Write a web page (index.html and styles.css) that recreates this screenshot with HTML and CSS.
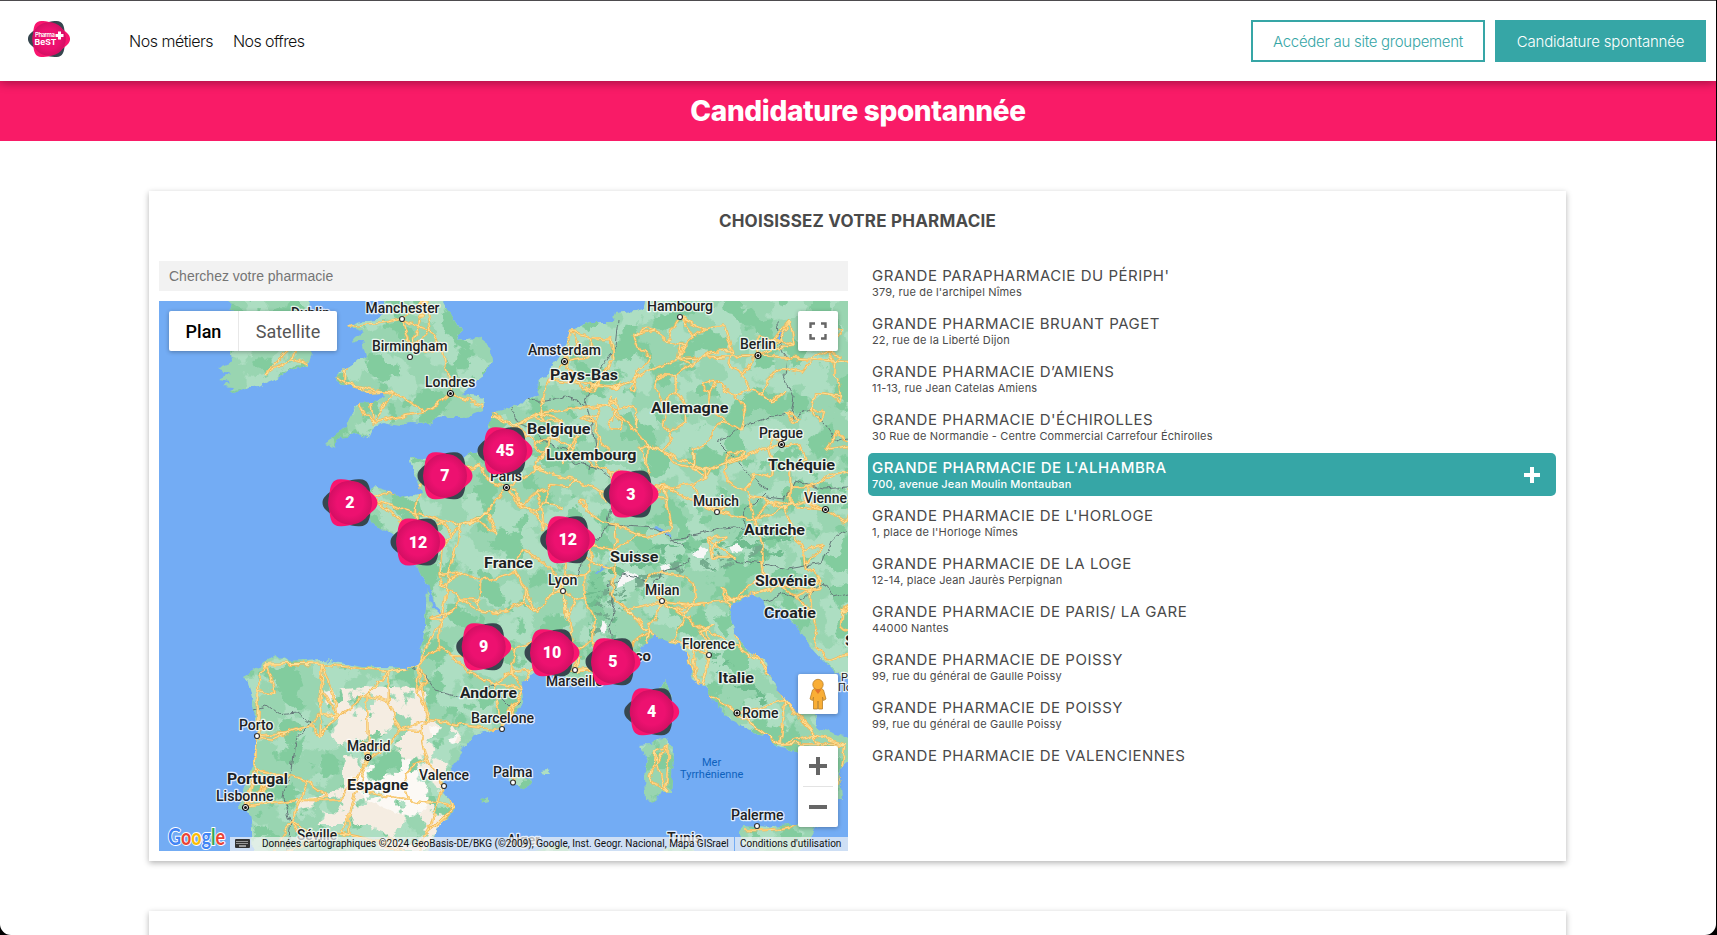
FILE: index.html
```html
<!DOCTYPE html>
<html lang="fr">
<head>
<meta charset="utf-8">
<title>Candidature spontannée</title>
<link rel="stylesheet" href="styles.css">
</head>
<body>
<div class="window">
<header class="header">
  <svg class="logo" viewBox="0 0 42 36" width="42" height="36">
    <use href="#badge" transform="translate(21 18) scale(.765)"/>
    <text class="logo-name" x="7" y="16" textLength="20">Pharma</text>
    <text class="logo-best" x="6.500" y="23.500" textLength="22" lengthAdjust="spacingAndGlyphs">BeST</text>
    <path d="M31.500 10.500v8M27.500 14.500h8" stroke="#fff" stroke-width="3"/>
  </svg>
  <nav class="nav"><a class="nav-a">Nos métiers</a><a class="nav-b">Nos offres</a></nav>
  <div class="actions"><a class="btn btn-outline"><span>Accéder au site groupement</span></a><a class="btn btn-full"><span>Candidature spontannée</span></a></div>
</header>
<h1 class="banner"><span>Candidature spontannée</span></h1>
<main class="content">
  <section class="card">
    <h2 class="card-title">CHOISISSEZ VOTRE PHARMACIE</h2>
    <div class="columns">
      <div class="left">
        <div class="search">Cherchez votre pharmacie</div>
        <div class="map">
          <svg class="map-svg" viewBox="159 301 689 550" width="689" height="550">
            <defs>
              <g id="badge">
                <path fill="#37474f" d="M-27.500 0c0-5 4-8 9-12C-8-20 0-24 10-23.500C18-23.500 20-17 20.500-8C21-3 21 3 20.500 8C20 17 18 23.500 10 23.500C0 24-8 20-18.500 12C-23.500 8-27.500 5-27.500 0z"/>
                <path fill="#f9156f" d="M27.500 0c0 5-4 8-9 12C8 20 0 24-10 23.500C-18 23.500-20 17-20.500 8C-21 3-21-3-20.500-8C-20-17-18-23.500-10-23.500C0-24 8-20 18.500-12C23.500-8 27.500-5 27.500 0z"/>
                <circle r="22" fill="url(#ball)"/>
              </g>
              <radialGradient id="ball"><stop offset=".6" stop-color="#ed1170"/><stop offset="1" stop-color="#d30f63"/></radialGradient>
              <g id="town"><circle r="2.500" fill="#fff" stroke="#333" stroke-width="1.200"/></g>
              <g id="capital"><circle r="3" fill="#fff" stroke="#111" stroke-width="1.200"/><circle r="1.500" fill="#111"/></g>
              <clipPath id="land">
                <path d="M225 295L310 295L306 312L310 350L312 353L308 366L292 370L277 378L260 385L230 394L234 388L222 387L229 382L218 380L231 374L216 369L232 362L230 340L238 325L233 311Z"/>
                <path d="M383 295L386 312L378 320L357 322L348 327L363 332L356 336L350 343L363 340L367 357L350 365L334 378L340 383L347 385L368 393L383 392L384 398L372 403L358 404L350 417L347 427L325 443L335 447L340 437L357 433L368 438L373 427L383 423L400 426L410 422L427 423L443 418L463 418L483 410L484 398L462 395L470 387L483 377L492 360L490 347L478 338L457 340L460 330L450 313L440 295Z"/>
                <path d="M647 295L643 309L637 311L615 313L613 322L590 322L570 330L567 343L560 357L545 377L537 387L540 394L528 398L510 408L490 413L490 430L480 450L463 457L465 467L452 463L427 465L425 459L410 458L417 477L422 493L400 498L390 491L377 487L362 492L363 510L370 523L390 532L400 545L417 565L423 577L427 585L425 627L418 665L407 668L380 667L363 667L323 660L287 662L277 656L265 662L243 677L247 683L250 693L253 710L257 737L253 763L243 790L238 807L250 813L252 830L253 860L425 860L438 827L455 807L443 793L445 783L452 767L463 750L475 735L502 728L510 717L523 703L522 683L533 673L553 675L567 677L600 687L623 673L640 650L653 635L677 643L687 653L693 680L707 690L713 703L733 720L753 733L767 735L777 747L797 752L806 770L826 790L836 800L843 800L842 787L838 770L850 760L850 738L823 730L815 725L818 716L798 713L783 697L770 680L767 663L740 643L733 630L730 613L733 603L753 593L763 600L767 612L780 607L793 623L807 643L833 670L860 690L860 295Z"/>
                <path d="M640 745L650 744L663 737L673 747L672 777L671 793L660 793L655 802L645 800L644 777L647 760ZM666 680L670 690L668 720L655 720L656 700ZM737 833L743 825L767 827L797 823L818 825L812 835L797 851L770 857L743 845ZM507 780L518 774L533 779L524 790L517 785ZM480 800L488 796L488 803L483 804ZM540 770L547 769L551 774L543 774ZM470 860L560 845L600 860ZM655 852L690 846L702 860Z"/>
              </clipPath>
              <filter id="rough" x="-5%" y="-5%" width="110%" height="110%"><feTurbulence type="fractalNoise" baseFrequency=".09" numOctaves="3" seed="4"/><feDisplacementMap in="SourceGraphic" scale="8" xChannelSelector="R" yChannelSelector="G"/></filter>
              <filter id="light" color-interpolation-filters="sRGB" x="0" y="0" width="100%" height="100%"><feTurbulence type="fractalNoise" baseFrequency=".028" numOctaves="4" seed="8"/><feColorMatrix values="0 0 0 0 .68  0 0 0 0 .87  0 0 0 0 .76  30 0 0 0 -14.500"/></filter>
              <filter id="forest" color-interpolation-filters="sRGB" x="0" y="0" width="100%" height="100%"><feTurbulence type="fractalNoise" baseFrequency=".036" numOctaves="4" seed="21"/><feColorMatrix values="0 0 0 0 .51  0 0 0 0 .80  0 0 0 0 .62  0 30 0 0 -16.800"/></filter>
              <filter id="dry" color-interpolation-filters="sRGB" x="-10%" y="-10%" width="120%" height="120%"><feTurbulence type="fractalNoise" baseFrequency=".035" numOctaves="4" seed="3" result="n"/><feColorMatrix in="n" values="0 0 0 0 1  0 0 0 0 1  0 0 0 0 1  0 30 0 0 -13.800" result="m"/><feComposite in="SourceGraphic" in2="m" operator="in"/></filter>
              <filter id="relief" color-interpolation-filters="sRGB" x="0" y="0" width="100%" height="100%"><feTurbulence type="fractalNoise" baseFrequency=".06 .12" numOctaves="4" seed="5" result="n"/><feColorMatrix in="n" values="0 0 0 0 1  0 0 0 0 1  0 0 0 0 1  0 22 0 0 -12" result="m"/><feComposite in="SourceGraphic" in2="m" operator="in"/></filter>
            </defs>
            <rect x="159" y="301" width="689" height="550" fill="#73acf4"/>
            <g filter="url(#rough)" color-interpolation-filters="sRGB">
              <g clip-path="url(#land)">
                <rect x="150" y="290" width="710" height="570" fill="#99d5b1"/>
                <rect x="150" y="290" width="710" height="570" filter="url(#light)"/>
                <rect x="150" y="290" width="710" height="570" filter="url(#forest)"/>
                <g filter="url(#dry)"><path fill="#f5ede2" d="M325 690L365 686L420 688L440 705L462 740L445 770L440 800L450 810L425 850L380 850L370 825L300 825L296 800L340 790L345 760L330 735Z"/><path fill="#fcf9f5" d="M430 725L458 735L450 758L435 750ZM375 758L410 760L440 790L415 820L365 800L350 780Z"/></g>
                <path fill="#6fbd8f" filter="url(#relief)" d="M585 590L610 560L660 545L700 540L780 520L800 530L780 560L720 570L670 575L630 590L615 640L590 640ZM700 635L730 660L770 700L760 705L715 670Z"/>
                <path fill="#7b9a8d" opacity=".5" filter="url(#relief)" d="M590 640L600 590L640 570L740 550L770 545L740 565L650 582L620 600L610 640Z"/>
                <path fill="#f7f7f7" d="M618 578l12-6 8 4-10 8-12 3zM692 556l8-10 7 5-6 8zM730 547l8-2 3 5-8 2zM603 620l5 7-4 6-4-5zM660 566l7-3 4 6-8 3z"/>
                <g class="rivers"><path d="M427 585l6 18 8 15M655 527l15 8M594 573l14-7M785 330l-10 12"/></g>
                <g class="borders"><path d="M618 320l-3 28-12 18-8 10-10 25 6 20 4 25-5 25M528 398l12 4 10-2 15-4 12 4 10 8M511 408l8 16 18 6 10 15 18 5 10 12 20 6 12 8 20 8M618 483l-8 30-3 12-12 20-12 12-6 22M607 525l18 2 30 2 15 8 12 10M600 640l14 10-4-20 4-25-6-18 15-12 20 4 10 12 6-18 20-6 12-8M671 540l25-6 25-5 25-2-4-15 12-8 14-14-20-16-18-20-12-12 12-8 20-10 24-8 16-4M778 322l2 20 6 14-2 20 10 22-4 20M790 418l20-8 15 14 12 18 11-4M765 497l20 2 10-18 28 8 25-2M733 560l25 3 30 6 35-6 8-22 17-12M763 602l20-8 20 6 20-18 10 15 15-4M412 668l14 8 10 14 30 8 25-12 20 20 10-5M253 710l14-4 10 8 22-2 12 10-16 18-4 30-8 28 8 24-5 40"/></g>
                <g class="roads" id="roads"></g>
              </g>
            </g>
            <g class="labels" id="labels"></g>
            <g class="sea"><text x="702" y="766">Mer</text><text x="680" y="778">Tyrrhénienne</text></g>
            <g class="logo-g"><text x="168" y="845" textLength="57" lengthAdjust="spacingAndGlyphs"><tspan fill="#4285f4">G</tspan><tspan fill="#ea4335">o</tspan><tspan fill="#fbbc05">o</tspan><tspan fill="#4285f4">g</tspan><tspan fill="#34a853">l</tspan><tspan fill="#ea4335">e</tspan></text></g>
            <g id="clusters" class="clusters"></g>
          </svg>
          <div class="types"><b>Plan</b><span>Satellite</span></div>
          <div class="control full"><svg width="18" height="18" viewBox="0 0 18 18"><path d="M1.500 6V1.500H6M12 1.500h4.500V6M16.500 12v4.500H12M6 16.500H1.500V12" fill="none" stroke="#666" stroke-width="2.400"/></svg></div>
          <div class="control pegman"><svg width="18" height="32" viewBox="0 0 18 32"><g fill="#f9ae36" stroke="#b9802a" stroke-width=".8"><path d="M3.500 12L1 21l2.500 1.500L4.500 19V31h4l.5-8 .5 8h4V19l1 3.500L17 21l-2.500-9L12 10H6z"/><circle cx="9" cy="6.500" r="5.200"/></g><path d="M5.500 11.500h7L9 16z" fill="#e5742b"/></svg></div>
          <div class="control zoom"><svg width="40" height="81" viewBox="0 0 40 81"><path d="M11 20h18M20 11v18M11 61h18" stroke="#666" stroke-width="4"/><path d="M5 40.500h30" stroke="#e3e3e3"/></svg></div>
          <div class="legal">
            <span class="keys"><svg width="15" height="9" viewBox="0 0 15 9"><rect width="15" height="9" rx="1" fill="#333"/><path d="M1.500 2.500h12M1.500 4.500h12" stroke="#fff" stroke-dasharray="1 1"/><path d="M4 7h7" stroke="#fff"/></svg></span>
            <span class="data">Données cartographiques ©2024 GeoBasis-DE/BKG (©2009), Google, Inst. Geogr. Nacional, Mapa GISrael</span>
            <span class="terms">Conditions d'utilisation</span>
          </div>
        </div>
      </div>
      <ul class="list">
        <li><b>GRANDE PARAPHARMACIE DU PÉRIPH'</b><small>379, rue de l'archipel Nîmes</small></li>
        <li><b>GRANDE PHARMACIE BRUANT PAGET</b><small>22, rue de la Liberté Dijon</small></li>
        <li><b>GRANDE PHARMACIE D’AMIENS</b><small>11-13, rue Jean Catelas Amiens</small></li>
        <li><b>GRANDE PHARMACIE D'ÉCHIROLLES</b><small>30 Rue de Normandie - Centre Commercial Carrefour Échirolles</small></li>
        <li class="active"><b>GRANDE PHARMACIE DE L'ALHAMBRA</b><small>700, avenue Jean Moulin Montauban</small><svg class="plus" width="16" height="16" viewBox="0 0 16 16"><path d="M8 0v16M0 8h16" stroke="#fff" stroke-width="4"/></svg></li>
        <li><b>GRANDE PHARMACIE DE L'HORLOGE</b><small>1, place de l'Horloge Nîmes</small></li>
        <li><b>GRANDE PHARMACIE DE LA LOGE</b><small>12-14, place Jean Jaurès Perpignan</small></li>
        <li><b>GRANDE PHARMACIE DE PARIS/ LA GARE</b><small>44000 Nantes</small></li>
        <li><b>GRANDE PHARMACIE DE POISSY</b><small>99, rue du général de Gaulle Poissy</small></li>
        <li><b>GRANDE PHARMACIE DE POISSY</b><small>99, rue du général de Gaulle Poissy</small></li>
        <li><b>GRANDE PHARMACIE DE VALENCIENNES</b></li>
      </ul>
    </div>
  </section>
  <section class="card next"></section>
</main>
</div>
<script src="map.js"></script>
</body>
</html>
```
FILE: styles.css
```css
* { box-sizing: border-box; }
html, body { margin: 0; height: 935px; overflow: hidden; background: #000; }
body { font-family: Inter, "Liberation Sans", sans-serif; color: #4a4a4a; }
.window { width: 1716px; height: 935px; overflow: hidden; background: #fff; border-top: 1px solid #4d4b4e; border-radius: 0 0 11px 11px; }
.header { height: 80px; display: flex; align-items: center; padding: 0 10px 0 28px; background: #fff; position: relative; box-shadow: 0 1px 10px rgba(0, 0, 0, .4); }
.logo { margin-top: -4px; flex: none; }
.logo-name { font: 600 6px Inter, sans-serif; fill: #fff; }
.logo-best { font: 700 8px Inter, sans-serif; fill: #fff; }
.nav { display: flex; gap: 20px; margin-left: 59px; font-size: 16px; font-weight: 300; color: #111; }
.nav-a { width: 84px; letter-spacing: -.48px; white-space: nowrap; }
.nav-b { letter-spacing: -.6px; white-space: nowrap; }
.actions { display: flex; gap: 10px; margin-left: auto; }
.btn { height: 42px; display: flex; align-items: center; justify-content: center; font-size: 15px; border: 2px solid #36a6a6; color: #36a6a6; white-space: nowrap; }
.btn-outline { width: 234px; font-weight: 300; letter-spacing: -.28px; }
.btn-full { width: 211px; background: #36a6a6; color: #fff; font-weight: 300; letter-spacing: -.18px; }
.banner { margin: 0; height: 60px; display: flex; align-items: center; justify-content: center; background: #f91b67; color: #fff; font-size: 28px; font-weight: 800; letter-spacing: -.35px; }
.content { padding: 50px 150px 0 149px; }
.card { height: 670px; background: #fff; box-shadow: 0 2px 6px rgba(0, 0, 0, .3); padding: 0 10px; margin-bottom: 50px; }
.card-title { margin: 0; height: 70px; padding-top: 19px; line-height: 22px; text-align: center; font-size: 17px; font-weight: 700; letter-spacing: .22px; }
.columns { display: flex; gap: 20px; }
.left { width: 689px; }
.search { height: 30px; margin-bottom: 10px; padding-left: 10px; background: #f2f2f2; line-height: 30px; font-family: "Liberation Sans", sans-serif; font-size: 14px; color: #757575; }
.map { position: relative; width: 689px; height: 550px; overflow: hidden; font-family: Roboto, sans-serif; }
.map-svg { display: block; }
.roads { fill: none; stroke-linejoin: round; }
.road-edge { stroke: #f3b95a; stroke-width: 2.3; }
.road-core { stroke: #ffe39b; stroke-width: .9; }
.borders { fill: none; stroke: #66797a; stroke-width: 1; }
.rivers { fill: none; stroke: #73acf4; stroke-width: 2.5; }
.labels text { font: 500 14px Roboto, sans-serif; fill: #1d2224; stroke: #fff; stroke-opacity: .8; stroke-width: 2.5px; paint-order: stroke; stroke-linejoin: round; }
.labels .country { font-size: 15.5px; font-weight: 700; }
.labels .tiny { font-size: 11px; font-weight: 400; }
.sea { font: 400 11px Roboto, sans-serif; fill: #0e62bd; }
.logo-g { font: 400 22px Lato, sans-serif; stroke: #fff; stroke-width: 2px; paint-order: stroke; }
.logo-g text { font-weight: 700; }
.clusters text { font: 900 16px Roboto, sans-serif; fill: #fff; text-anchor: middle; }
.types { position: absolute; left: 10px; top: 10px; width: 168px; height: 40px; display: flex; background: #fff; border-radius: 2px; box-shadow: 0 1px 4px rgba(0, 0, 0, .3); font-size: 18px; line-height: 41px; text-align: center; color: #565656; }
.types b { width: 70px; font-weight: 500; color: #000; border-right: 1px solid #e8e8e8; }
.types span { flex: 1; }
.control { position: absolute; left: 639px; width: 40px; height: 40px; display: flex; align-items: center; justify-content: center; background: #fff; border-radius: 2px; box-shadow: 0 1px 4px rgba(0, 0, 0, .3); }
.full { top: 10px; }
.pegman { top: 373px; }
.zoom { top: 445px; height: 81px; }
.legal { position: absolute; right: 0; bottom: 0; width: 618px; height: 14px; display: flex; font-size: 10px; line-height: 14px; color: #111; white-space: nowrap; }
.legal span { background: rgba(245, 245, 245, .7); }
.keys { width: 26px; padding: 2px 0 0 5px; line-height: 0; }
.data { width: 478px; padding-left: 6px; }
.terms { margin-left: 1px; flex: 1; padding-left: 5px; }
.list { margin: 0; padding: 0; list-style: none; flex: 1; height: 502px; overflow: hidden; }
.list li { position: relative; height: 43px; margin-bottom: 5px; padding: 5px 0 0 4px; border-radius: 5px; }
.list b, .list small { display: block; white-space: nowrap; width: max-content; }
.list b { font-size: 15px; font-weight: 400; line-height: 19px; height: 19px; letter-spacing: .52px; }
.list small { font-size: 11px; font-weight: 400; line-height: 15px; letter-spacing: .16px; }
.list .active { background: #36a6a6; color: #fff; }
.active b, .list .active small { font-weight: 500; }
.plus { position: absolute; right: 16px; top: 14px; }
```
FILE: map.js
```javascript
const NS = 'http://www.w3.org/2000/svg';
function add(parent, tag, attrs, text) {
  const e = document.createElementNS(NS, tag);
  for (const k in attrs) e.setAttribute(k, attrs[k]);
  if (text) e.textContent = text;
  parent.appendChild(e);
  return e;
}

// Seeded generator keeps the secondary road network stable between loads.
let seed = 17;
function rnd() { seed = (seed * 16807) % 2147483647; return seed / 2147483647; }

const nodes = [
  [402,319],[412,350],[450,393],[393,392],[368,392],[373,423],[425,412],[483,405],[430,330],[345,382],[300,340],[265,375],[292,358],[442,352],[350,326],[425,300],
  [490,415],[515,425],[540,413],[506,488],[480,465],[453,470],[415,513],[372,498],[415,540],[462,525],[487,512],[441,620],[478,655],[525,590],[563,591],[568,545],[535,470],[575,480],[610,495],[575,670],[545,665],[523,690],[610,665],[480,580],
  [387,672],[430,720],[502,730],[368,760],[444,785],[367,695],[340,715],[322,690],[265,665],[258,690],[257,736],[245,807],[320,735],[300,800],[305,845],[430,830],[410,800],[322,664],[418,665],[286,733],[278,775],[255,770],[385,845],[350,835],[452,808],[400,730],
  [550,380],[565,361],[610,405],[615,388],[680,317],[655,330],[678,358],[758,355],[735,395],[648,445],[705,470],[717,512],[665,487],[781,444],[825,510],[790,505],[755,520],[715,545],[640,535],[615,550],[585,575],[615,525],
  [662,601],[628,610],[648,632],[705,630],[733,600],[695,605],[709,655],[737,713],[780,745],[760,660],[846,745],[810,590],[780,585],[805,550],[835,475],[770,400],[790,320],[835,362],[700,690],[785,700],[815,735],
  [655,750],[668,745],[650,780],[665,792],[743,830],[790,827],[838,790],[515,783]
];
function scatter(x0, y0, x1, y1, step) {
  for (let x = x0; x < x1; x += step) for (let y = y0; y < y1; y += step)
    nodes.push([x + rnd() * step * .9, y + rnd() * step * .9]);
}
scatter(570, 325, 850, 515, 19);
scatter(520, 405, 570, 500, 18);
scatter(592, 375, 640, 425, 12);
scatter(420, 475, 600, 665, 27);
scatter(600, 520, 850, 600, 30);
scatter(265, 685, 440, 840, 36);
scatter(640, 595, 730, 640, 22);
scatter(800, 600, 850, 660, 22);

const used = new Set();
let d = '';
nodes.forEach((a, i) => {
  nodes.map((b, j) => [Math.hypot(a[0] - b[0], a[1] - b[1]), j])
    .sort((p, q) => p[0] - q[0]).slice(1, i < 118 ? 4 : 3)
    .forEach(([len, j]) => {
      const key = Math.min(i, j) + '-' + Math.max(i, j);
      if (len > 75 || used.has(key)) return;
      used.add(key);
      const b = nodes[j], k = len * .16;
      d += `M${a[0]} ${a[1]}Q${(a[0] + b[0]) / 2 + (rnd() - .5) * k} ${(a[1] + b[1]) / 2 + (rnd() - .5) * k} ${b[0]} ${b[1]}`;
    });
});
// Main motorways
d += 'M506 488L487 512L462 525L450 570L441 620L418 665L387 672L367 695L368 760L340 800L300 800L245 807M506 488L540 520L568 545L563 591L572 640L575 670L545 665L523 690L502 730L475 745L450 785L452 808L430 830M418 665L425 705L430 720L460 725L502 730M506 488L535 470L575 480L610 495L665 487L717 512L755 520L790 505L825 510M515 425L540 413L610 405L648 445L705 470L781 444M550 380L615 388L678 358L758 355L848 362M575 670L610 665L628 648L648 632L687 653L700 690L737 713L780 745M628 610L662 601L695 605L733 600L780 585L810 590M662 601L705 630L760 660L785 700L815 735L846 745M265 665L322 664L387 672M258 690L257 736L255 770L245 807';
const roads = document.getElementById('roads');
add(roads, 'path', { d, class: 'road-edge' });
add(roads, 'path', { d, class: 'road-core' });

// name, left, baseline, width, country label?
const labels = document.getElementById('labels');
[['Manchester',365.5,312.7,74],['Birmingham',372,351,75.5],['Londres',425,387,50.5],['Dublin',291,318,39],['Hambourg',647,311,66],['Amsterdam',528,355,73],['Berlin',740,349,36],['Pays-Bas',550,380,68,1],['Allemagne',651,413,77.5,1],['Belgique',527,434,63.5,1],['Luxembourg',546,460,90.5,1],['Prague',759,438,44],['Tchéquie',768,470,67,1],['Paris',490,481,32],['Munich',693,506,46],['Vienne',804,503,43],['Autriche',744,535,61,1],['Suisse',610,562,48.5,1],['France',484,568,49,1],['Lyon',548,585,29.5],['Slovénie',755,586,61,1],['Milan',645,595,34.5],['Croatie',764,618,52,1],['Florence',682,649,53],['Italie',718,683,36,1],['Rome',742,718,36.5],['Monaco',597,661,54,1],['Marseille',546,686,57],['Andorre',460,698,57,1],['Barcelone',471,723,63],['Porto',239,730,34.5],['Madrid',347,751,43.5],['Portugal',227,784,61,1],['Espagne',347,790,61.5,1],['Lisbonne',216,801,57.5],['Valence',419,780,50],['Palma',493,777,39.5],['Séville',297,840,40],['Alger',507,845,33],['Tunis',667,843,35],['Palerme',731,820,52.5],['S',845,646,10,1]]
  .forEach(([name, x, y, w, c]) => add(labels, 'text', { x, y, textLength: w, lengthAdjust: 'spacingAndGlyphs', class: c ? 'country' : 'city' }, name));
add(labels, 'text', { x: 841, y: 681, class: 'tiny' }, 'P');
add(labels, 'text', { x: 838, y: 691, class: 'tiny' }, 'По');
[[402,319],[410,357],[680,317],[717,512],[563,591],[662,601],[709,655],[575,670],[502,729],[257,736],[444,786],[513,782.5],[757,826]]
  .forEach(([x, y]) => add(labels, 'use', { href: '#town', x, y }));
[[450.5,393.5],[564.5,361.5],[758,355.5],[781.5,444.5],[506.5,487.5],[825.5,509.5],[737,713],[368,757.5],[245.5,807.5]]
  .forEach(([x, y]) => add(labels, 'use', { href: '#capital', x, y }));

const clusters = document.getElementById('clusters');
[[505,450.7,45],[445,475.7,7],[350,502.7,2],[418,542,12],[631,494,3],[567.7,539.7,12],[483.7,646.7,9],[552,652.7,10],[613,661.7,5],[651.7,711.7,4]]
  .forEach(([x, y, n]) => {
    add(clusters, 'use', { href: '#badge', x, y });
    add(clusters, 'text', { x, y: y + 5.5 }, String(n));
  });
```
